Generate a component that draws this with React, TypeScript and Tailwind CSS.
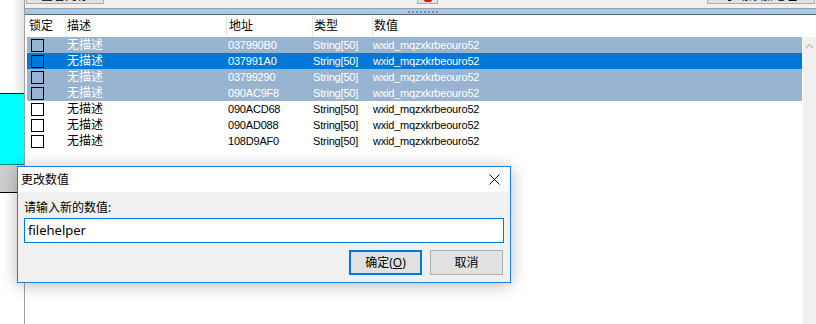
import type React from "react";

type RowState = "inactive" | "active" | "none";

interface Row {
  addr: string;
  state: RowState;
}

const rows: Row[] = [
  { addr: "037990B0", state: "inactive" },
  { addr: "037991A0", state: "active" },
  { addr: "03799290", state: "inactive" },
  { addr: "090AC9F8", state: "inactive" },
  { addr: "090ACD68", state: "none" },
  { addr: "090AD088", state: "none" },
  { addr: "108D9AF0", state: "none" },
];

const listFont = {
  fontFamily: '"Liberation Sans", "Noto Sans CJK SC", sans-serif',
};
const dialogFont = {
  fontFamily: '"Noto Sans", "Noto Sans CJK SC", sans-serif',
};

const rowClass: Record<RowState, string> = {
  inactive: "bg-[#99b4d1] text-white",
  active: "bg-[#0078d7] text-white",
  none: "bg-white text-black",
};

const LeftStrip: React.FC = () => (
  <div className="flex w-[24px] shrink-0 flex-col">
    <div className="h-[93px] bg-gradient-to-r from-white via-white to-[#e4e4e4]" />
    <div className="h-px bg-[#000080]" />
    <div className="h-[70px] bg-[#00ffff]" />
    <div className="h-px bg-[#008080]" />
    <div className="h-[27px] bg-[#cfcfcf]" />
    <div className="h-px bg-black" />
    <div className="flex-1 bg-white" />
  </div>
);

const Toolbar: React.FC = () => (
  <div className="flex h-[9px] items-end overflow-hidden border-b border-[#a0a0a0] bg-[#f0f0f0]">
    <div className="mb-[4px] ml-px flex h-[20px] w-[78px] items-end justify-center border border-[#adadad] bg-[#e1e1e1] text-[12px] leading-[13px]">
      查看内存
    </div>
    <div className="mb-[4px] ml-[313px] flex h-[20px] w-[21px] items-end justify-center border border-[#adadad] bg-[#e1e1e1]">
      <div className="mb-[1px] h-[4px] w-[8px] rounded-sm bg-[#e01010]" />
    </div>
    <div className="mb-[4px] ml-[269px] flex h-[20px] w-[108px] items-end justify-center border border-[#adadad] bg-[#e1e1e1] text-[12px] leading-[13px]">
      手动添加地址
    </div>
  </div>
);

const Splitter: React.FC = () => (
  <div className="flex h-[5px] items-center bg-[#a6c8ef]">
    <div className="ml-[383px] flex gap-[2px]">
      {Array.from({ length: 8 }).map((_, i) => (
        <div key={i} className="h-[2px] w-[2px] bg-[#7890b0]" />
      ))}
    </div>
  </div>
);

const Header: React.FC = () => (
  <div className="grid h-[22px] grid-cols-[38px_161px_86px_60px_1fr] bg-white pl-[2px] text-[12px] text-black">
    <div className="flex items-center pl-[2px]">锁定</div>
    <div className="flex items-center border-l border-[#e5e5e5] pl-[1px]">描述</div>
    <div className="flex items-center border-l border-[#e5e5e5] pl-[2px]">地址</div>
    <div className="flex items-center border-l border-[#e5e5e5] pl-[1px]">类型</div>
    <div className="flex items-center border-l border-[#e5e5e5] pl-[1px]">数值</div>
  </div>
);

const AddressList: React.FC = () => (
  <div className="flex flex-1">
    <div className="flex-1 pl-[2px] pr-px">
      {rows.map((r) => (
        <div
          key={r.addr}
          className={`grid h-[16px] grid-cols-[38px_161px_86px_60px_1fr] items-center text-[11px] leading-[16px] tracking-[-0.2px] ${rowClass[r.state]}`}
        >
          <div className="flex items-center pl-[4px]">
            <div className="h-[13px] w-[13px] border border-black" />
          </div>
          <div className="pl-[2px] text-[12px] tracking-normal">无描述</div>
          <div className="pl-[2px]">{r.addr}</div>
          <div className="pl-px">String[50]</div>
          <div className="pl-px">wxid_mqzxkrbeouro52</div>
        </div>
      ))}
    </div>
    <div className="flex w-[13px] flex-col items-center bg-[#f0f0f0] pt-[6px]">
      <svg width="9" height="6" viewBox="0 0 9 6">
        <path d="M1 5 L4.5 1.5 L8 5" fill="none" stroke="#c2c2c2" strokeWidth="1.5" />
      </svg>
    </div>
  </div>
);

const Dialog: React.FC = () => (
  <div
    className="absolute left-[17px] top-[166px] flex h-[117px] w-[494px] flex-col border border-[#1883d7] bg-[#f0f0f0] shadow-[0_2px_16px_rgba(0,0,0,0.28)]"
    style={dialogFont}
  >
    <div className="flex h-[25px] items-center justify-between bg-white pl-[3px] pr-[10px] text-[12px] text-black">
      <span>更改数值</span>
      <svg width="11" height="11" viewBox="0 0 11 11">
        <path d="M0.5 0.5 L10.5 10.5 M10.5 0.5 L0.5 10.5" stroke="#000" strokeWidth="1" />
      </svg>
    </div>
    <div className="flex flex-1 flex-col pl-[6px] pr-[6px] pt-[8px]">
      <div className="h-[16px] text-[12px] leading-[16px] text-black">请输入新的数值:</div>
      <div className="mt-[2px] flex h-[25px] items-center border border-[#0078d7] bg-white pl-[3px] text-[13px] text-black">
        filehelper
      </div>
      <div className="mt-[7px] flex justify-end gap-[8px] pr-px">
        <div className="flex h-[25px] w-[73px] items-center justify-center border-2 border-[#0078d7] bg-[#e1e1e1] text-[12px] text-black">
          确定(<span className="underline">O</span>)
        </div>
        <div className="flex h-[25px] w-[73px] items-center justify-center border border-[#adadad] bg-[#e1e1e1] text-[12px] text-black">
          取消
        </div>
      </div>
    </div>
  </div>
);

export default function App() {
  return (
    <div className="relative flex h-[324px] w-[816px] overflow-hidden bg-white" style={listFont}>
      <LeftStrip />
      <div className="flex flex-1 flex-col border-l border-[#a0a0a0]">
        <Toolbar />
        <Splitter />
        <div className="h-px bg-[#646464]" />
        <Header />
        <AddressList />
      </div>
      <Dialog />
    </div>
  );
}
